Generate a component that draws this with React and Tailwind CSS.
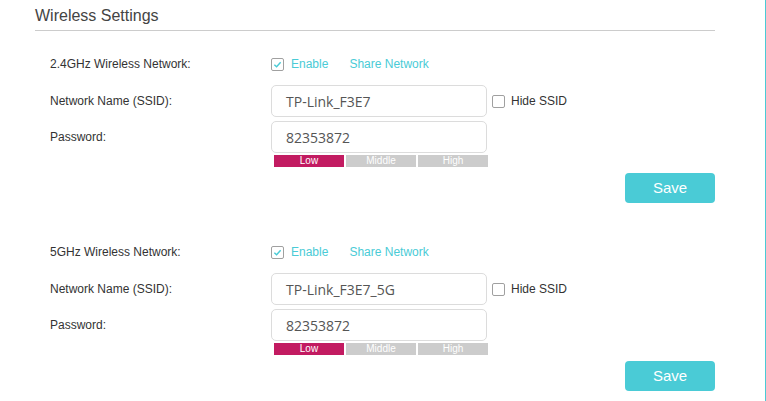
import React from 'react';

const Check = ({ checked }) => (
    <span className="w-[13px] h-[13px] border border-[#a0a0a0] rounded-[2px] flex items-center justify-center bg-white">
        {checked && (
            <svg width="9" height="9" viewBox="0 0 10 10">
                <path d="M1.5 5.2 L4 7.5 L8.5 2.5" fill="none" stroke="#4acbd6" strokeWidth="1.6" />
            </svg>
        )}
    </span>
);

const Band = ({ title, ssid, password, first }) => (
    <div className={first ? 'mt-[21px]' : 'mt-[37px]'}>
        <div className="flex items-center h-[24px]">
            <div className="w-[236px] pl-[15px] text-[12px] text-[#333]">{title}</div>
            <Check checked />
            <span className="ml-[7px] text-[12px] text-[#4acbd6]">Enable</span>
            <span className="ml-[21px] text-[12px] text-[#4acbd6]">Share Network</span>
        </div>
        <div className="flex items-center h-[32px] mt-[9px]">
            <div className="w-[236px] pl-[15px] text-[12px] text-[#333]">Network Name (SSID):</div>
            <div className="w-[216px] h-full border border-[#dcdcdc] rounded-[5px] flex items-center pl-[14px] text-[14px] text-[#555] font-['Open_Sans',sans-serif]">{ssid}</div>
            <span className="ml-[5px]"><Check /></span>
            <span className="ml-[6px] text-[12px] text-[#333]">Hide SSID</span>
        </div>
        <div className="flex items-center h-[32px] mt-[4px]">
            <div className="w-[236px] pl-[15px] text-[12px] text-[#333]">Password:</div>
            <div className="w-[216px] h-full border border-[#dcdcdc] rounded-[5px] flex items-center pl-[14px] text-[14px] text-[#555] font-['Open_Sans',sans-serif]">{password}</div>
        </div>
        <div className="flex gap-[2px] ml-[239px] mt-[2px] h-[12px] text-[10px] leading-[12px] text-white">
            <div className="w-[70px] bg-[#c21b61] text-center">Low</div>
            <div className="w-[70px] bg-[#cccccc] text-center">Middle</div>
            <div className="w-[70px] bg-[#cccccc] text-center">High</div>
        </div>
        <div className="flex justify-end mt-[6px]">
            <button className="w-[90px] h-[30px] rounded-[4px] bg-[#4acbd6] text-white text-[15px]">Save</button>
        </div>
    </div>
);

export default function App() {
    return (
        <div className="w-[766px] h-[401px] bg-white border-r border-[#4acbd6] overflow-hidden font-['Liberation_Sans',Arial,sans-serif]">
            <div className="w-[680px] ml-[35px]">
                <div className="pt-[4px] h-[31px] text-[16px] text-[#444] border-b border-[#cccccc]">Wireless Settings</div>
                <Band first title="2.4GHz Wireless Network:" ssid="TP-Link_F3E7" password="82353872" />
                <Band title="5GHz Wireless Network:" ssid="TP-Link_F3E7_5G" password="82353872" />
            </div>
        </div>
    );
}
